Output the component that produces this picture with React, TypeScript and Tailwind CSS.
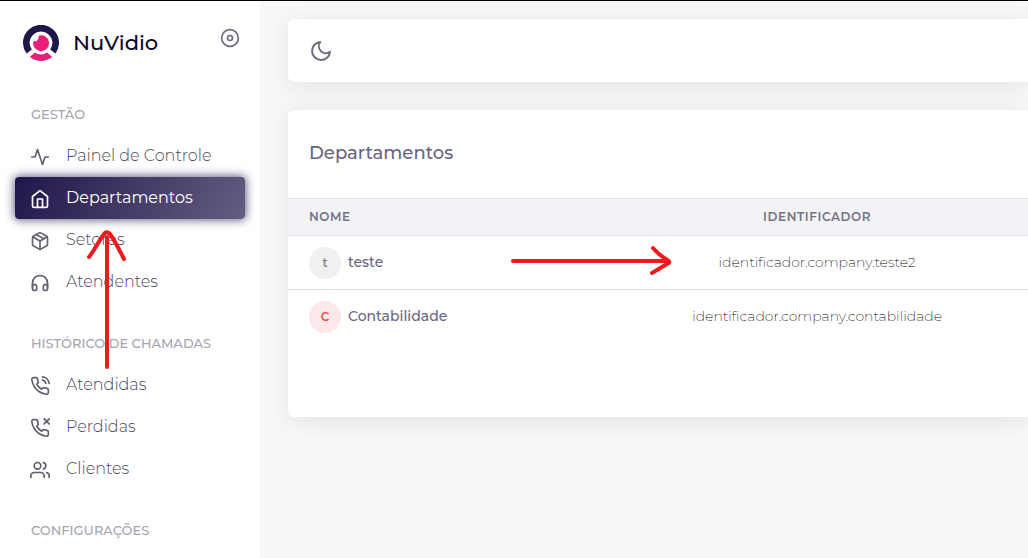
import type { IconType } from "react-icons";
import {
  FiActivity,
  FiDisc,
  FiHeadphones,
  FiHome,
  FiMoon,
  FiPackage,
  FiPhoneCall,
  FiPhoneMissed,
  FiUsers,
} from "react-icons/fi";

type NavItem = { label: string; icon: IconType; active?: boolean };
type NavGroup = { title: string; items: NavItem[] };

const groups: NavGroup[] = [
  {
    title: "GESTÃO",
    items: [
      { label: "Painel de Controle", icon: FiActivity },
      { label: "Departamentos", icon: FiHome, active: true },
      { label: "Setores", icon: FiPackage },
      { label: "Atendentes", icon: FiHeadphones },
    ],
  },
  {
    title: "HISTÓRICO DE CHAMADAS",
    items: [
      { label: "Atendidas", icon: FiPhoneCall },
      { label: "Perdidas", icon: FiPhoneMissed },
      { label: "Clientes", icon: FiUsers },
    ],
  },
  { title: "CONFIGURAÇÕES", items: [] },
];

const departments = [
  { name: "teste", initial: "t", id: "identificador.company.teste2", tone: "bg-[#f0f0f0] text-[#82868b]" },
  { name: "Contabilidade", initial: "C", id: "identificador.company.contabilidade", tone: "bg-[#fce8e8] text-[#ea5455]" },
];

function Logo() {
  return (
    <svg viewBox="0 0 36 36" className="size-9" aria-hidden="true">
      <path d="M3.6 28.6A18 18 0 1 1 32.4 28.6L27.2 24.6A11.4 11.4 0 1 0 8.8 24.6Z" fill="#21164a" />
      <path d="M11.8 27.6Q18 31.4 24.2 27.6L29.2 32.1Q18 39.9 6.8 32.1Z" fill="#ea1d78" />
      <path d="M15.8 10.5A8 8 0 1 1 10.3 16.2Q15.8 17.2 15.8 10.5Z" fill="#ea1d78" />
    </svg>
  );
}

function Sidebar() {
  return (
    <aside className="w-[260px] shrink-0 bg-white">
      <div className="flex h-[73px] items-start justify-between pl-[23px] pr-5 pt-6">
        <a href="#" className="flex items-center gap-[14px]">
          <Logo />
          <span className="text-[21px] font-medium leading-9 text-[#0b0730]">NuVidio</span>
        </a>
        <button type="button" aria-label="Recolher menu" className="mt-[3px] text-[#6e6b7b]">
          <FiDisc size={20} />
        </button>
      </div>
      <nav>
        {groups.map((group) => (
          <section key={group.title}>
            <h2 className="px-[31px] pb-[10px] pt-[29px] text-[13px] font-medium leading-[22px] text-[#a6a4b0]">
              {group.title}
            </h2>
            <ul className="px-[15px]">
              {group.items.map(({ label, icon: Icon, active }) => (
                <li key={label}>
                  <a
                    href="#"
                    aria-current={active ? "page" : undefined}
                    className={
                      active
                        ? "flex h-[42px] items-center gap-4 rounded bg-linear-[118deg,#21164a,#645d80] px-[15px] text-white shadow-[0_0_10px_1px_rgba(33,22,74,0.7)]"
                        : "flex h-[42px] items-center gap-4 px-[15px] text-[#625f6e]"
                    }
                  >
                    <Icon size={20} className="mt-px" />
                    <span className={active ? "text-[16px] font-normal" : "text-[16px] font-light text-[#4c4958]"}>
                      {label}
                    </span>
                  </a>
                </li>
              ))}
            </ul>
          </section>
        ))}
      </nav>
    </aside>
  );
}

function DepartmentsCard() {
  return (
    <section className="rounded-l-md bg-white pb-[73px] shadow-[0_4px_24px_0_rgba(34,41,47,0.1)]">
      <h1 className="px-[21px] pb-[31px] pt-[30px] text-[18px] font-medium leading-[27px] text-[#6a6480]">Departamentos</h1>
      <table className="w-full table-fixed border-collapse">
        <thead>
          <tr className="h-[37px] border-y border-[#e6e5ee] bg-[#f3f2f7] text-[12px] text-[#757283]">
            <th scope="col" className="w-[43%] px-[21px] text-left font-semibold tracking-wider">NOME</th>
            <th scope="col" className="text-center font-semibold tracking-wider">IDENTIFICADOR</th>
          </tr>
        </thead>
        <tbody>
          {departments.map((d) => (
            <tr key={d.name} className="h-[54px] border-b border-[#dddde0] last:border-b-0">
              <td className="px-[21px]">
                <div className="flex items-center gap-[7px]">
                  <span className={`flex size-8 items-center justify-center rounded-full text-[12px] font-semibold ${d.tone}`}>
                    {d.initial}
                  </span>
                  <span className="text-[14px] font-medium text-[#6a6480]">{d.name}</span>
                </div>
              </td>
              <td className="text-center text-[14px] font-extralight text-black">{d.id}</td>
            </tr>
          ))}
        </tbody>
      </table>
    </section>
  );
}

export default function App() {
  return (
    <div className="relative flex h-screen min-h-0 overflow-hidden border-t border-black bg-[#f8f8f8] font-['Montserrat','Inter',sans-serif]">
      <Sidebar />
      <main className="min-w-0 flex-1 pl-7 pt-[18px]">
        <header className="mb-7 flex h-[63px] items-center rounded-l-md bg-white px-[21px] shadow-[0_4px_24px_0_rgba(34,41,47,0.1)]">
          <button type="button" aria-label="Modo escuro" className="text-[#6e6b7b]">
            <FiMoon size={24} />
          </button>
        </header>
        <DepartmentsCard />
      </main>
      <svg
        className="pointer-events-none absolute left-[86px] top-[228px] h-[142px] w-[42px]"
        viewBox="0 0 42 142"
        fill="none"
        stroke="#ed1c1c"
        strokeWidth="4"
        strokeLinecap="round"
        strokeLinejoin="round"
        aria-hidden="true"
      >
        <path d="M21 138V8M3 28C9 21 14 9 19 4Q21 2 24 5C29 12 33 20 38 30" />
      </svg>
      <svg
        className="pointer-events-none absolute left-[508px] top-[242px] h-[36px] w-[168px]"
        viewBox="0 0 168 36"
        fill="none"
        stroke="#ed1c1c"
        strokeWidth="4"
        strokeLinecap="round"
        strokeLinejoin="round"
        aria-hidden="true"
      >
        <path d="M5 18H158M145 5Q151 12 158 16Q164 19 159 21L144 30" />
      </svg>
    </div>
  );
}
